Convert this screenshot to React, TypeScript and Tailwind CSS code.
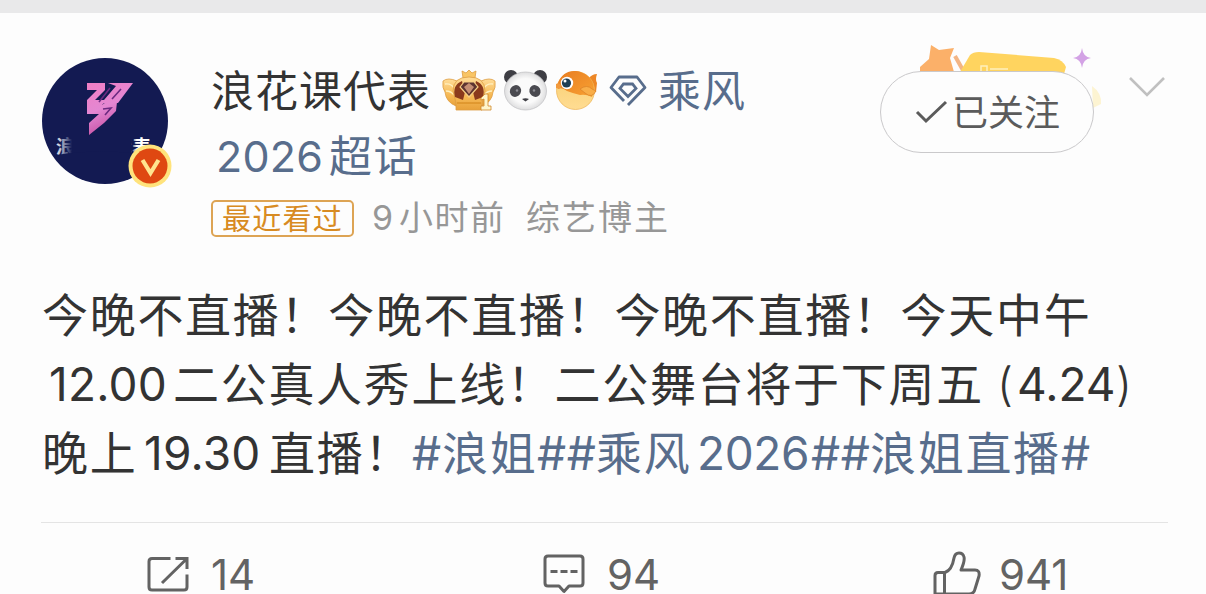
import type { ReactNode } from "react"

const Run = ({ className = "", children }: { className?: string; children: ReactNode }) => (
  <span className={`inline-block shrink-0 whitespace-nowrap ${className}`}>{children}</span>
)

const Avatar = () => (
  <svg className="h-[130px] w-[132px] shrink-0" viewBox="0 0 132 130" fill="none">
    <defs>
      <linearGradient id="wave" gradientUnits="userSpaceOnUse" x1="48" y1="24" x2="72" y2="76">
        <stop offset="0" stopColor="#f07fc4" />
        <stop offset="0.5" stopColor="#e487d2" />
        <stop offset="1" stopColor="#c0489c" />
      </linearGradient>
      <linearGradient id="smudge" x1="0" x2="1">
        <stop offset="0" stopColor="#131a52" stopOpacity="0" />
        <stop offset="0.08" stopColor="#131a52" stopOpacity="0.3" />
        <stop offset="0.2" stopColor="#131a52" />
        <stop offset="0.85" stopColor="#131a52" />
        <stop offset="0.92" stopColor="#131a52" stopOpacity="0" />
      </linearGradient>
    </defs>
    <circle cx="63" cy="63" r="63" fill="#131a52" />
    <path d="M45 25h18v7L53 42h9l12-14-8-3h25L76 45H62l-3 3H45v-6l10-10H45z" fill="url(#wave)" />
    <path d="M45 47h15l4-3h11l-1 9-12 12-15 12V65l10-9H45z" fill="url(#wave)" />
    <path d="M68 30L57 44M79 31l-9 10M61 51l8-1-6 7" stroke="#6c2a80" strokeWidth="1.600" />
    <text x="14" y="96" fontSize="19" fontWeight="700" fill="#fff" fontFamily="Noto Sans CJK SC, sans-serif">浪花课代表</text>
    <path d="M12 78h90v24H12z" fill="url(#smudge)" />
    <path d="M14 97q42 -7 98 0v5H14z" fill="#131a52" />
    <circle cx="108" cy="108" r="21.500" fill="#ffe37c" />
    <circle cx="108" cy="108" r="17.500" fill="#df4812" />
    <path d="M100.500 102l8 13 8-13" stroke="#ffe48f" strokeWidth="4.200" />
  </svg>
)

const Crown = () => (
  <svg className="h-[44px] w-[54px]" viewBox="0 0 54 44">
    <defs>
      <linearGradient id="gold" x1="0" y1="0" x2="0" y2="1">
        <stop offset="0" stopColor="#ffdc97" />
        <stop offset="0.6" stopColor="#f6b955" />
        <stop offset="1" stopColor="#e8a13a" />
      </linearGradient>
    </defs>
    <path d="M15 12Q6 8 1 12q-1 7 2 11 1 10 11 14zM39 12q9-4 14 0 1 7-2 11-1 10-11 14z" fill="url(#gold)" stroke="#dd9d42" strokeWidth="0.8" />
    <path d="M3 15q6-1 9 4M4 22q5 0 8 4M51 15q-6-1-9 4M50 22q-5 0-8 4" fill="none" stroke="#fff0c0" strokeWidth="1.4" />
    <path d="M20 2l4 2 3-3 3 3 4-2-1 7h-12z" fill="#f9c565" stroke="#dd9d42" strokeWidth="0.8" />
    <path d="M11 22q0-14 16-14t16 14l-3 12v7H14v-7z" fill="url(#gold)" stroke="#dd9d42" strokeWidth="0.8" />
    <path d="M20 12q-10 4-7 16l8 3 2-8zM34 12q10 4 7 16l-8 3-2-8z" fill="#8b3a1c" />
    <path d="M18 18l4-5h10l4 5-9 10z" fill="#5d3431" stroke="#f7cf85" strokeWidth="1.2" />
    <path d="M22 18l5-4 5 4-5 7z" fill="#c48e74" />
    <path d="M15 34h24" stroke="#d58a21" strokeWidth="1.2" />
    <path d="M39 29l4-4h3v12h3v4H39v-4h3v-7l-3 1z" fill="#fff5cb" stroke="#cf8829" strokeWidth="0.8" />
  </svg>
)

const Panda = () => (
  <svg className="h-[44px] w-[46px]" viewBox="0 0 46 44">
    <defs>
      <radialGradient id="fur">
        <stop offset="0.65" stopColor="#fafafa" />
        <stop offset="1" stopColor="#dededf" />
      </radialGradient>
    </defs>
    <circle cx="8" cy="8" r="7" fill="#3e3e44" />
    <circle cx="37" cy="8" r="7" fill="#3e3e44" />
    <ellipse cx="22.500" cy="22" rx="21" ry="19" fill="url(#fur)" stroke="#bebec1" strokeWidth="0.7" />
    <ellipse cx="12.500" cy="22" rx="5.500" ry="6" fill="#4a4a50" transform="rotate(30 12.500 22)" />
    <ellipse cx="32" cy="22" rx="5.500" ry="6" fill="#4a4a50" transform="rotate(-30 32 22)" />
    <circle cx="14" cy="21.500" r="1.200" fill="#8d8d94" />
    <circle cx="31" cy="21.500" r="1.200" fill="#8d8d94" />
    <path d="M19 30q3.500 -1.500 7 0l-3.500 2.500z" fill="#3e3e44" />
  </svg>
)

const Fish = () => (
  <svg className="h-[44px] w-[44px]" viewBox="0 0 44 44">
    <defs>
      <linearGradient id="belly" x1="0" y1="0" x2="0" y2="1">
        <stop offset="0" stopColor="#f8cf71" />
        <stop offset="1" stopColor="#ffdc92" />
      </linearGradient>
      <linearGradient id="scale" x1="0" y1="0" x2="1" y2="1">
        <stop offset="0" stopColor="#e87c20" />
        <stop offset="1" stopColor="#f8a233" />
      </linearGradient>
    </defs>
    <path d="M33 10q4-5 9-5-2 6 0 9l-1 9-8-3z" fill="#ed8726" />
    <circle cx="20.500" cy="21.500" r="19" fill="url(#belly)" stroke="#edb04f" strokeWidth="0.7" />
    <path d="M3 14C6 6 12 2 19 2c11 0 20 8 20 18l-2 8q-6-3-12-2-8-2-13-4-5-4-9-2z" fill="url(#scale)" />
    <path d="M25 20q7-5 12 0l4 2q-4 8-11 2z" fill="#f9ae48" stroke="#d9822a" strokeWidth="0.7" />
    <circle cx="12" cy="14" r="6.200" fill="#fff" />
    <circle cx="11.500" cy="14" r="4.600" fill="#1f3f55" />
    <circle cx="10" cy="12" r="1.500" fill="#fff" />
    <path d="M1 15q4-2 5 2 0 4-5 2z" fill="#f29a3d" />
  </svg>
)

const Gem = () => (
  <svg className="h-[34px] w-[38px]" viewBox="0 0 38 34" fill="none" stroke="#586d8c" strokeWidth="2.800">
    <path d="M15 27L2 13.500 10 3h18l8 10.500L19 31" strokeLinejoin="round" />
    <path d="M14 29.500L10 14.500l4-4.500h10l3.500 4.500-8.500 8-7.500-7" stroke="none" />
    <path d="M19 22.500l-8-8 3.500-4.500h9l3.500 4.500z" />
  </svg>
)

const FollowDecor = () => (
  <svg className="absolute -top-[31px] left-[34px] h-[72px] w-[190px]" viewBox="0 0 190 72">
    <path d="M17 5l8 5 15-2-4 10 4 14H6v-5l9-8z" fill="#fbb069" />
    <path d="M41 16l9 16" stroke="#f3b584" strokeWidth="4" />
    <path d="M46 32l10-17q3-3 9-3l75 6q9 2 12 9l-2 7z" fill="#ffd45f" />
    <path d="M67 31v-5h6v5M76 29h18" fill="none" stroke="#fff0bd" strokeWidth="1.500" />
    <path d="M168 8q1 9 9 10-8 1-9 10-1-9-9-10 8-1 9-10z" fill="#d3a2e5" />
    <path d="M178 46q10 7 9 18l-8 4z" fill="#fdf4d2" />
  </svg>
)

const ShareIcon = () => (
  <svg className="h-[36px] w-[42px]" viewBox="0 0 42 36" fill="none" stroke="#636363" strokeWidth="3">
    <path d="M23.500 2.500H5q-3 0-3 3V31q0 3 3 3h32q3 0 3-3V18.500M28.500 2.500H40V13M39 3.500L15 27" />
  </svg>
)

const CommentIcon = () => (
  <svg className="h-[40px] w-[42px]" viewBox="0 0 42 40" fill="none" stroke="#636363" strokeWidth="3">
    <path d="M5 2h32q3 0 3 3v24q0 3-3 3H26l-5 5.500L16 32H5q-3 0-3-3V5q0-3 3-3z" strokeLinejoin="round" />
    <path d="M7.500 17.500h7M17.500 17.500h7M27.500 17.500h7" />
  </svg>
)

const LikeIcon = () => (
  <svg className="h-[46px] w-[48px]" viewBox="0 0 48 46" fill="none" stroke="#636363" strokeWidth="3">
    <path d="M12 21.500H5q-3 0-3 3V43h34q5 0 6-5l4-13q1-6-4-6H28q4-9 3-13-1-4-5-4t-5 5q-2 12-9 14.500zM11.500 22v21" strokeLinejoin="round" />
  </svg>
)

export default function App() {
  return (
    <div className="h-[594px] w-[1206px] overflow-hidden bg-[#fdfdfd] font-['Inter','Noto_Sans_CJK_SC',sans-serif] text-[#333]">
      <div className="h-[13px] bg-[#e9e9ea]" />

      <header className="flex h-[268px] items-start pt-[45px] pl-[42px]">
        <Avatar />
        <div className="ml-[37px] w-[669px]">
          <div className="flex h-[65px] items-center text-[43px] leading-[65px] tracking-[1px]">
            <Run className="w-[231px] pt-[2px]">浪花课代表</Run>
            <div className="flex items-center">
              <Crown />
              <div className="ml-[7px]"><Panda /></div>
              <div className="ml-[6px]"><Fish /></div>
              <div className="ml-[10px]"><Gem /></div>
            </div>
            <Run className="ml-[11px] pt-[2px] text-[#586d8c]">乘风</Run>
          </div>
          <div className="flex h-[66px] pl-[5px] text-[43px] leading-[66px] tracking-[1.500px] text-[#586d8c]">
            <Run className="w-[113px] tracking-[0.200px]">2026</Run>
            <Run>超话</Run>
          </div>
          <div className="flex h-[56px] items-center text-[34px] tracking-[2px] text-[#979797]">
            <span className="mt-[2px] flex h-[37px] w-[143px] items-center justify-center rounded-[5px] border-2 border-[#dda454] pt-[3px] text-[29px] leading-none tracking-[1.200px] text-[#d88b22]">
              最近看过
            </span>
            <Run className="ml-[18px] w-[27px]">9</Run>
            <Run className="w-[127px] tracking-[1.500px]">小时前</Run>
            <Run>综艺博主</Run>
          </div>
        </div>
        <div className="relative mt-[13px] h-[82px] w-[214px]">
          <FollowDecor />
          <button className="relative flex h-full w-full items-center rounded-full border border-[#cac9cb] bg-[#fdfdfd] pl-[34px] text-[36px] text-[#5b5b5b]">
            <svg className="h-[26px] w-[34px]" viewBox="0 0 34 26" fill="none" stroke="#5b5b5b" strokeWidth="3">
              <path d="M2 13l9 9L31 3" />
            </svg>
            <Run className="ml-[3px] pt-[2px]">已关注</Run>
          </button>
        </div>
        <svg className="mt-[17px] ml-[34px] h-[24px] w-[38px]" viewBox="0 0 38 24" fill="none" stroke="#c0c0c0" strokeWidth="2.600">
          <path d="M2 3l17 17L36 3" />
        </svg>
      </header>

      <main className="pl-[42px] text-[46px] leading-[69px] tracking-[1.700px]">
        <div className="flex">
          <Run>今晚不直播！今晚不直播！今晚不直播！今天中午</Run>
        </div>
        <div className="flex pl-[7px]">
          <Run className="w-[124px] tracking-[0.200px]">12.00</Run>
          <Run className="w-[824px]">二公真人秀上线！二公舞台将于下周五</Run>
          <Run className="w-[20px] font-light">(</Run>
          <Run className="w-[99px] tracking-[0px]">4.24</Run>
          <Run className="font-light">)</Run>
        </div>
        <div className="flex">
          <Run className="w-[102px]">晚上</Run>
          <Run className="w-[125px] tracking-[0.200px]">19.30</Run>
          <Run className="w-[143px]">直播！</Run>
          <div className="flex text-[#586d8c]">
            <Run className="w-[30px]">#</Run>
            <Run className="w-[95px]">浪姐</Run>
            <Run className="w-[59px] tracking-[0.500px]">##</Run>
            <Run className="w-[101px]">乘风</Run>
            <Run className="w-[114px] tracking-[-0.400px]">2026</Run>
            <Run className="w-[59px] tracking-[0.500px]">##</Run>
            <Run className="w-[191px]">浪姐直播</Run>
            <Run>#</Run>
          </div>
        </div>
      </main>

      <footer className="mx-[41px] mt-[34px] flex h-[72px] w-[1127px] items-start border-t border-[#e4e4e4] pt-[28px] text-[42px] leading-[38px] text-[#636363]">
        <div className="flex h-[46px] w-[396px] items-center pl-[106px]">
          <ShareIcon />
          <Run className="ml-[22px] pt-px">14</Run>
        </div>
        <div className="flex h-[46px] w-[390px] items-center pl-[106px]">
          <CommentIcon />
          <Run className="ml-[22px] pt-px">94</Run>
        </div>
        <div className="flex h-[46px] items-center pl-[106px]">
          <LikeIcon />
          <Run className="ml-[18px] pt-px">941</Run>
        </div>
      </footer>
    </div>
  )
}
